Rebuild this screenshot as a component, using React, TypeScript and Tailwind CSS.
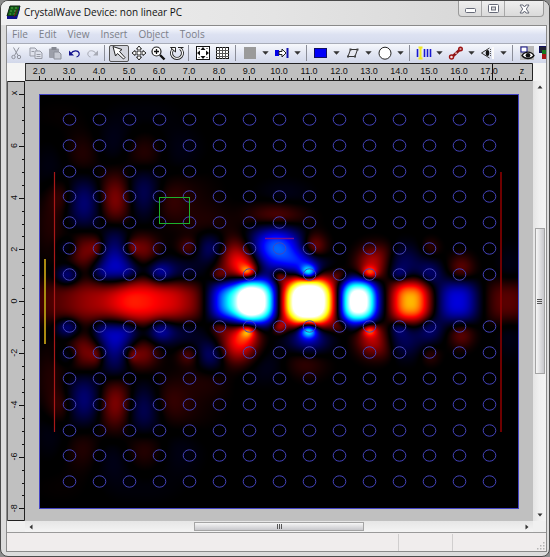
import { useLayoutEffect, useRef } from "react";
import type { ReactNode } from "react";

const MENUS = ["File", "Edit", "View", "Insert", "Object", "Tools"];

const PLOT_W = 480;
const PLOT_H = 415;
const AXIS_Y = 207;

// z, x (pixels from the plot's left edge / from the guide axis), widths, amplitude
type Blob = [number, number, number, number, number];

const GUIDE_MODES: Blob[] = [
  [20, 0, 34, 17, 0.3],
  [62, 0, 24, 17, 0.4],
  [102, 0, 26, 18, 1.05],
  [146, 0, 17, 16, 0.5],
  [196, 0, 18, 15, -1.9],
  [217, 0, 14, 16, -3.1],
  [269, 0, 17, 17, 4.6],
  [319, 0, 13, 16, -3.6],
  [371, 0, 14, 16, 1.75],
  [418, 0, 15, 16, -0.88],
  [468, 0, 16, 17, 0.4],
];

const MIRRORED: Blob[] = [
  [198, 44, 14, 14, 0.9],
  [206, 34, 9, 8, 0.6],
  [208, 30, 5, 4, 0.9],
  [180, 26, 6, 5, 0.3],
  [269, 29, 6, 5, -1.9],
  [269, 38, 12, 8, -0.3],
  [240, 25, 5, 5, 0.6],
  [300, 25, 6, 5, 0.3],
  [333, 37, 11, 12, 0.75],
  [330, 29, 5, 4, 0.9],
  [346, 50, 8, 8, 0.15],
  [364, 38, 14, 13, -0.36],
  [360, 27, 6, 5, -0.3],
  [391, 28, 9, 9, -0.4],
  [391, 54, 7, 7, 0.2],
  [422, 34, 9, 9, 0.36],
  [470, 34, 10, 18, -0.1],
  [172, 53, 11, 11, -0.5],
  [76, 36, 14, 16, -0.78],
  [62, 29, 7, 6, -0.2],
  [76, 66, 10, 12, -0.25],
  [90, 29, 8, 6, -0.2],
  [46, 50, 12, 13, 0.52],
  [57, 54, 5, 7, 0.25],
  [101, 52, 12, 11, 0.52],
  [93, 54, 4, 5, 0.25],
  [121, 29, 9, 8, -0.6],
  [140, 30, 16, 11, -0.22],
  [28, 26, 8, 7, -0.55],
  [28, 54, 8, 7, -0.28],
  [149, 54, 8, 7, 0.32],
  [45, 98, 13, 18, -0.48],
  [76, 102, 12, 19, 0.56],
  [104, 108, 13, 18, -0.4],
  [129, 98, 14, 15, 0.2],
  [22, 105, 9, 12, 0.24],
  [12, 78, 12, 26, 0.15],
  [44, 146, 13, 16, 0.17],
  [105, 147, 14, 14, 0.21],
  [74, 156, 14, 20, -0.13],
  [138, 150, 18, 18, -0.1],
  [12, 130, 14, 20, -0.1],
  [166, 78, 18, 15, 0.14],
  [146, 114, 24, 15, 0.08],
  [20, 185, 24, 14, 0.04],
  [108, 188, 24, 12, -0.05],
];

const ONE_SIDED: Blob[] = [
  [236, 54, 19, 16, -1.4],
  [262, 40, 14, 9, -0.5],
  [237, 84, 20, 10, 0.5],
  [274, 54, 9, 10, 0.65],
  [245, 106, 20, 11, -0.12],
  [269, -38, 15, 12, -0.4],
  [264, -60, 16, 12, 0.28],
  [222, -62, 26, 14, -0.16],
];

const BLOBS: Blob[] = [
  ...MIRRORED,
  ...MIRRORED.map(([z, x, w, h, a]): Blob => [z, -x, w, h, a]),
  ...ONE_SIDED,
];

function fieldAt(px: number, py: number) {
  const x = AXIS_Y - py;
  let v = 0;
  for (const [z, , w, h, a] of GUIDE_MODES) {
    const dz = Math.abs(px - z) / w;
    const dx = Math.abs(x) / h;
    v += a * Math.exp(-0.5 * dz ** 2.4 - 0.5 * dx ** 2.8);
  }
  for (const [z, bx, w, h, a] of BLOBS) {
    const dz = (px - z) / w;
    const dx = (x - bx) / h;
    v += a * Math.exp(-0.5 * (dz * dz + dx * dx));
  }
  return v;
}

function FieldMap() {
  const ref = useRef<HTMLCanvasElement>(null);

  useLayoutEffect(() => {
    const ctx = ref.current?.getContext("2d");
    if (!ctx) return;
    const image = ctx.createImageData(PLOT_W, PLOT_H);
    for (let y = 0; y < PLOT_H; y++) {
      for (let x = 0; x < PLOT_W; x++) {
        const v = fieldAt(x, y);
        const m = Math.max(0, Math.abs(v) - 0.02);
        const i = (y * PLOT_W + x) * 4;
        // hot scale for positive values, cold scale for negative ones
        image.data[i + (v > 0 ? 0 : 2)] = Math.min(1, m) * 255;
        image.data[i + 1] = Math.min(1, Math.max(0, m - 1)) * 255;
        image.data[i + (v > 0 ? 2 : 0)] = Math.min(1, Math.max(0, m - 2)) * 255;
        image.data[i + 3] = 255;
      }
    }
    ctx.putImageData(image, 0, 0);
  }, []);

  return <canvas ref={ref} width={PLOT_W} height={PLOT_H} className="block w-full" />;
}

const COLS = Array.from({ length: 15 }, (_, i) => 30 + i * 30);
const ROWS = [-7, -6, -5, -4, -3, -2, -1, 1, 2, 3, 4, 5, 6, 7];

function Lattice() {
  return (
    <svg viewBox="0 0 480 415" className="absolute inset-0 h-full w-full" fill="none">
      {ROWS.map((r) =>
        COLS.map((c) => (
          <ellipse key={`${r}-${c}`} cx={c + 0.5} cy={Math.round(AXIS_Y - r * 25.9) - 0.5} rx="6.3" ry="5.7" stroke="#4444bc" />
        )),
      )}
      <rect x="120.5" y="103.5" width="30" height="26" stroke="#1cb02c" />
      <path d="M226 144.5H255" stroke="#74108c" strokeWidth="1.4" />
      <path d="M15.5 78V338" stroke="#a81818" strokeWidth="1.2" />
      <path d="M462 78V338" stroke="#8b0000" strokeWidth="1.6" />
      <path d="M6 165V250" stroke="#a98a10" strokeWidth="2" />
      <rect x="0.5" y="0.5" width="479" height="414" stroke="#4444c4" />
    </svg>
  );
}

function TopRuler() {
  const ticks = Array.from({ length: 82 }, (_, i) => i);
  return (
    <svg viewBox="0 0 508 18" className="block w-full bg-[#c0c0c0]" fill="none" fontFamily="'Liberation Sans', Arial, sans-serif" fontSize="9">
      {ticks.map((i) => (
        <path key={i} d={`M${14.5 + i * 6} ${i % 5 ? 15 : 13}V17`} stroke="#111" />
      ))}
      {Array.from({ length: 16 }, (_, i) => (
        <text key={i} x={14 + i * 30} y="11" textAnchor="middle" fill="#111">
          {(i + 2).toFixed(1)}
        </text>
      ))}
      <text x="497" y="11" textAnchor="middle" fill="#111">z</text>
      <path d="M467.5 0V17" stroke="#111" />
      <path d="M0 17.5H507.5V0.5H0" stroke="#222" />
      <path d="M0.5 0V18" stroke="#333" />
    </svg>
  );
}

function SideRuler() {
  return (
    <svg viewBox="0 0 18 440" preserveAspectRatio="xMinYMin" className="block w-full bg-[#c0c0c0]" fill="none" fontFamily="'Liberation Sans', Arial, sans-serif" fontSize="9">
      {Array.from({ length: 33 }, (_, i) => (
        <path key={i} d={`M${i % 4 ? 15 : 12} ${Math.round(13 + i * 12.95) + 0.5}H17`} stroke="#111" />
      ))}
      {[6, 4, 2, 0, -2, -4, -6, -8].map((n) => (
        <text key={n} transform={`translate(10 ${220 - n * 25.9}) rotate(-90)`} textAnchor="middle" fill="#111">
          {n}
        </text>
      ))}
      <text transform="translate(10 12) rotate(-90)" textAnchor="middle" fill="#111">x</text>
      <path d="M17.5 0V439.5H0M0 0.5H17" stroke="#222" />
      <path d="M0.5 0V440" stroke="#555" />
    </svg>
  );
}

function Tool({ label, wide, pressed, disabled, children }: { label: string; wide?: boolean; pressed?: boolean; disabled?: boolean; children: ReactNode }) {
  return (
    <button
      type="button"
      aria-label={label}
      aria-pressed={pressed}
      disabled={disabled}
      className={`flex h-[17px] shrink-0 items-center justify-center ${wide ? "w-5" : "w-[19px]"} ${
        pressed ? "rounded-xs border border-[#555] bg-[#d4d6de]" : ""
      }`}
    >
      <svg viewBox="0 0 16 16" className="h-4 w-4 shrink-0" fill="none">
        {children}
      </svg>
    </button>
  );
}

function Caret({ label }: { label: string }) {
  return (
    <button type="button" aria-label={label} className="flex h-[17px] w-[13px] shrink-0 items-center justify-center">
      <svg viewBox="0 0 7 4" className="h-1 w-[7px]">
        <path d="M0.3 0.3H6.7L3.5 3.8Z" fill="#333" />
      </svg>
    </button>
  );
}

function Separator() {
  return (
    <span className="flex h-4 w-[7px] shrink-0 pl-[2px]">
      <span className="w-px bg-[#8a8d98]" />
    </span>
  );
}

function Toolbar() {
  return (
    <div role="toolbar" aria-label="Device tools" className="flex h-5 items-center overflow-hidden border-t border-[#a8acb8] bg-linear-to-b from-[#f6f8fc] via-[#e2e6f3] to-[#d2d8ea] pb-px">
      <Tool label="Cut" disabled>
        <path d="M4.500 2.500L9 10.500M10 2.500L5.500 10.500" stroke="#8f929c" />
        <circle cx="4.500" cy="12" r="1.700" stroke="#8f929c" />
        <circle cx="10" cy="12" r="1.700" stroke="#8f929c" />
      </Tool>
      <Tool label="Copy" disabled>
        <path d="M2 3H7L9 5V11H2Z" fill="#dfe2ec" stroke="#979aa5" />
        <path d="M7 6H12L14 8V13.500H7Z" fill="#dfe2ec" stroke="#979aa5" />
        <path d="M8.500 9.500H12.500M8.500 11.500H12.500M3.500 6.500H6" stroke="#979aa5" />
      </Tool>
      <Tool label="Paste" disabled>
        <rect x="2" y="3.500" width="10" height="9.500" rx="1" fill="#9c9fa9" />
        <rect x="4.500" y="2" width="5" height="3" fill="#858892" />
        <path d="M7 7H12L14 9V14H7Z" fill="#c6c9d2" stroke="#8c8f99" />
      </Tool>
      <Tool label="Undo">
        <path d="M5 8.500C7 5 12 5 13 7.800C13.700 10 12.500 11.500 10.500 12" stroke="#10108c" strokeWidth="1.200" />
        <path d="M3 5.500V10.500H8Z" fill="#10108c" />
      </Tool>
      <Tool label="Redo" disabled>
        <path d="M11 8.500C9 5 4 5 3 7.800C2.300 10 3.500 11.500 5.500 12" stroke="#a6a9b3" />
        <path d="M13 5.500V10.500H8Z" fill="#a6a9b3" />
      </Tool>
      <Separator />
      <Tool label="Select" wide pressed>
        <path d="M2 1.500L11 4.500L8.500 6.500L14 12.500L12.500 14L6.500 8.500L4.500 11Z" fill="#fff" stroke="#222" />
      </Tool>
      <Tool label="Move">
        <path d="M8 1L10.500 4H9V7H12V5.500L15 8L12 10.500V9H9V12H10.500L8 15L5.500 12H7V9H4V10.500L1 8L4 5.500V7H7V4H5.500Z" fill="#fff" stroke="#222" />
      </Tool>
      <Tool label="Zoom">
        <circle cx="6.500" cy="6.500" r="4.500" fill="#fff" stroke="#222" strokeWidth="1.200" />
        <path d="M6.500 4V9M4 6.500H9" stroke="#111" strokeWidth="1.300" />
        <path d="M10 10L14.500 14.500" stroke="#111" strokeWidth="2.400" />
      </Tool>
      <Tool label="Rotate">
        <path d="M4.800 3.500A5.500 5.500 0 1 0 11.200 3.500" stroke="#222" strokeWidth="3" />
        <path d="M4.800 3.500A5.500 5.500 0 1 0 11.200 3.500" stroke="#fff" strokeWidth="1.200" />
        <path d="M1.500 2.500H6.500V7Z" fill="#fff" stroke="#222" />
        <path d="M9 2.500H14.500" stroke="#222" />
      </Tool>
      <Separator />
      <Tool label="Fit to window" wide>
        <rect x="1.500" y="1.500" width="13" height="13" fill="#fff" stroke="#111" />
        <path d="M8 2L10.500 5H5.500ZM8 14L10.500 11H5.500ZM2 8L5 5.500V10.500ZM14 8L11 5.500V10.500Z" fill="#111" />
        <path d="M3.500 3.500H4.500M11.500 3.500H12.500M3.500 12.500H4.500M11.500 12.500H12.500" stroke="#111" />
      </Tool>
      <Tool label="Show grid" wide>
        <rect x="1.500" y="2.500" width="12" height="11" fill="#fff" stroke="#111" />
        <path d="M4.500 2V14M7.500 2V14M10.500 2V14M1 5.500H14M1 8.500H14M1 11.500H14" stroke="#555" />
      </Tool>
      <Separator />
      <Tool label="Layer colour" disabled>
        <rect x="2" y="2" width="12" height="12" fill="#9a9a9a" />
      </Tool>
      <Caret label="Layer colours" />
      <Tool label="Port">
        <rect x="1" y="5" width="4" height="6" fill="#0000e8" />
        <path d="M5 6.500H8V4L12 8L8 12V9.500H5Z" fill="#fff" stroke="#222" />
        <rect x="12.500" y="3" width="2" height="10" fill="#1010b0" />
      </Tool>
      <Caret label="Ports" />
      <Separator />
      <Tool label="Rectangle">
        <rect x="1.500" y="3.500" width="12" height="9" fill="#0000f8" stroke="#101060" />
      </Tool>
      <Caret label="Blocks" />
      <Tool label="Lattice">
        <path d="M5.500 4.500H12.500L10 11.500H3Z" fill="#e6e8f0" stroke="#333" />
        <path d="M4.500 4.500H6.500M11.500 4.500H13.500M2 11.500H4M9 11.500H11" stroke="#444" strokeWidth="2" />
      </Tool>
      <Caret label="Lattices" />
      <Tool label="Ellipse">
        <circle cx="8" cy="8.200" r="6" fill="#fff" stroke="#222" />
      </Tool>
      <Caret label="Shapes" />
      <Separator />
      <Tool label="Excitor">
        <path d="M1.500 4V12M8.500 4V12M11.500 4V12M14.500 4V12" stroke="#1818d0" strokeWidth="1.600" />
        <path d="M2.500 2.500H6.500M2.500 13.500H6.500M4.500 2V14" stroke="#f0e820" strokeWidth="2" />
      </Tool>
      <Caret label="Excitors" />
      <Tool label="Path">
        <path d="M3.500 12.500L12.500 4" stroke="#8c1414" strokeWidth="2.600" />
        <circle cx="3.500" cy="12" r="2" fill="#f4dede" stroke="#9c1414" strokeWidth="1.400" />
        <circle cx="12.500" cy="4" r="1.800" fill="#d8a0a0" stroke="#9c1414" strokeWidth="1.400" />
        <circle cx="8" cy="8.200" r="0.900" fill="#e8b8b8" />
      </Tool>
      <Caret label="Paths" />
      <Tool label="Sensor">
        <path d="M9.500 3L1.500 8L9.500 13" stroke="#333" />
        <ellipse cx="7.500" cy="8" rx="1.800" ry="3" fill="#111" />
        <path d="M10.500 4V12" stroke="#555" strokeDasharray="1 1" />
        <rect x="12" y="2" width="2" height="12" fill="#fafafa" />
      </Tool>
      <Caret label="Sensors" />
      <Separator />
      <Tool label="Preview">
        <rect x="1" y="1" width="14" height="14" fill="#b9b9b9" />
        <rect x="2" y="2" width="6" height="5" fill="#fff" stroke="#111188" />
        <path d="M3 10.500C6 6 12 6 15 10.500C12 14.500 6 14.500 3 10.500Z" fill="#fff" stroke="#111" strokeWidth="1.300" />
        <circle cx="9" cy="10.300" r="2.400" fill="#111" />
      </Tool>
      <Tool label="Compare layers">
        <rect x="1.500" y="1.500" width="8" height="6" fill="#223" stroke="#11115c" />
        <rect x="4" y="5" width="10" height="5" fill="#147a1e" />
        <rect x="4" y="9" width="10" height="5" fill="#a81818" />
      </Tool>
    </div>
  );
}

function TitleBar() {
  return (
    <header className="flex h-6 items-start justify-between bg-linear-to-r from-[#f0f0f0] via-[#e4e4e4] to-[#d4d4d4] pr-[5px] pl-[5px]">
      <div className="flex items-center gap-[3px] pt-[3px]">
        <svg viewBox="0 0 15 15" className="h-[15px] w-[15px]">
          <path d="M4 1H14L11 11H1Z" fill="#125c16" stroke="#0a1e0c" />
          <path d="M1 11H11L14 1V4L11 14H1Z" fill="#10108a" />
          <path d="M5 3H7M9 3H11M4 6H6M8 6H10M3.500 9H5M7.500 9H9" stroke="#58a84c" strokeWidth="1.200" />
          <path d="M11 4L8 12" stroke="#6c1616" />
        </svg>
        <h1 className="text-[10px] leading-4 whitespace-nowrap text-[#111]">CrystalWave Device: non linear PC</h1>
      </div>
      <div className="flex h-4 overflow-hidden rounded-b-sm border border-t-0 border-[#9a9a9a] bg-linear-to-b from-[#efefef] to-[#dadada]">
        <button type="button" aria-label="Minimize" className="flex w-[23px] items-center justify-center border-r border-[#a8a8a8]">
          <svg viewBox="0 0 11 5" className="mt-1 h-[5px] w-[11px]">
            <rect x="0.500" y="0.500" width="10" height="4" rx="1" fill="#fff" stroke="#666a78" />
          </svg>
        </button>
        <button type="button" aria-label="Restore" className="flex w-[23px] items-center justify-center border-r border-[#a8a8a8]">
          <svg viewBox="0 0 11 9" className="h-[9px] w-[11px]">
            <rect x="0.500" y="0.500" width="10" height="8" rx="1" fill="#fff" stroke="#666a78" />
            <rect x="3.500" y="3" width="4" height="3" fill="#ddd" stroke="#666a78" />
          </svg>
        </button>
        <button type="button" aria-label="Close" className="flex w-[38px] items-center justify-center">
          <svg viewBox="0 0 11 10" className="h-[10px] w-[11px]">
            <path d="M1 1H4L5.500 3L7 1H10L7.300 5L10 9H7L5.500 7L4 9H1L3.700 5Z" fill="#fff" stroke="#666a78" />
          </svg>
        </button>
      </div>
    </header>
  );
}

function Arrow({ label, d }: { label: string; d: string }) {
  return (
    <button type="button" aria-label={label} className="flex h-3 w-3 shrink-0 items-center justify-center">
      <svg viewBox="0 0 6 6" className="h-[6px] w-[6px]">
        <path d={d} fill="#333" />
      </svg>
    </button>
  );
}

function VerticalScroll() {
  return (
    <div className="flex flex-col items-center bg-linear-to-r from-[#e4e4e4] via-[#f0f0f0] to-[#f4f4f4]">
      <Arrow label="Scroll up" d="M0.500 4.500L3 1.500L5.500 4.500Z" />
      <div className="grow" />
      <div className="flex h-1/3 w-[10px] flex-col items-center justify-center gap-px border border-[#a4a4a4] bg-linear-to-r from-[#f6f6f6] to-[#c8c8cc]">
        <span className="h-px w-[5px] bg-[#555]" />
        <span className="h-px w-[5px] bg-[#555]" />
        <span className="h-px w-[5px] bg-[#555]" />
      </div>
      <div className="grow" />
      <Arrow label="Scroll down" d="M0.500 1.500L3 4.500L5.500 1.500Z" />
    </div>
  );
}

function HorizontalScroll() {
  return (
    <div className="flex h-[11px] items-center bg-linear-to-b from-[#e6e6e6] to-[#f4f4f4]">
      <Arrow label="Scroll left" d="M4.500 0.500L1.500 3L4.500 5.500Z" />
      <div className="grow" />
      <div className="flex h-[9px] w-1/3 items-center justify-center gap-px border border-[#a4a4a4] bg-linear-to-b from-[#f6f6f6] to-[#c8c8cc]">
        <span className="h-[5px] w-px bg-[#555]" />
        <span className="h-[5px] w-px bg-[#555]" />
        <span className="h-[5px] w-px bg-[#555]" />
      </div>
      <div className="grow" />
      <Arrow label="Scroll right" d="M1.500 0.500L4.500 3L1.500 5.500Z" />
    </div>
  );
}

export default function App() {
  return (
    <div className="bg-[#8c8c8c] font-['Open_Sans','Noto_Sans',sans-serif]">
      <div className="overflow-hidden rounded-lg border border-[#4a4a4a] bg-[#dcdcdc]">
        <TitleBar />
        <div className="mr-[2px] mb-1 ml-[5px] border border-[#8a8a8a] bg-[#f0f0f0]">
          <nav className="flex h-[17px] items-center gap-[11px] bg-linear-to-b from-[#fafbfe] via-[#dde2f2] to-[#d6dcee] pb-px pl-[5px]">
            {MENUS.map((m) => (
              <button key={m} type="button" className="text-[10px] leading-4 text-[#7c7f88]">
                {m}
              </button>
            ))}
          </nav>
          <Toolbar />

          <div className="grid grid-cols-[18px_minmax(0,1fr)_13px]">
            <div className="bg-[#f4f4f4]" />
            <TopRuler />
            <div className="bg-[#f4f4f4]" />

            <SideRuler />
            <main className="bg-[#c0c0c0] pt-[13px] pr-[14px] pb-[12px] pl-[14px]">
              <div className="relative">
                <FieldMap />
                <Lattice />
              </div>
            </main>
            <VerticalScroll />

            <div className="bg-[#f0f0f0]" />
            <HorizontalScroll />
            <div className="bg-[#f0f0f0]" />
          </div>

          <footer className="flex h-[19px] items-stretch border-t border-[#9a9a9a] bg-[#f0eded] pt-px">
            <div className="grow border-r border-[#d0cece]" />
            <div className="w-[54px] border-r border-[#d0cece]" />
            <div className="flex w-[93px] items-end justify-end p-px">
              <svg viewBox="0 0 8 8" className="h-2 w-2" fill="#b4b4b4">
                <path d="M6 0H7.500V1.500H6ZM6 3H7.500V4.500H6ZM6 6H7.500V7.500H6ZM3 3H4.500V4.500H3ZM3 6H4.500V7.500H3ZM0 6H1.500V7.500H0Z" />
              </svg>
            </div>
          </footer>
        </div>
      </div>
    </div>
  );
}
